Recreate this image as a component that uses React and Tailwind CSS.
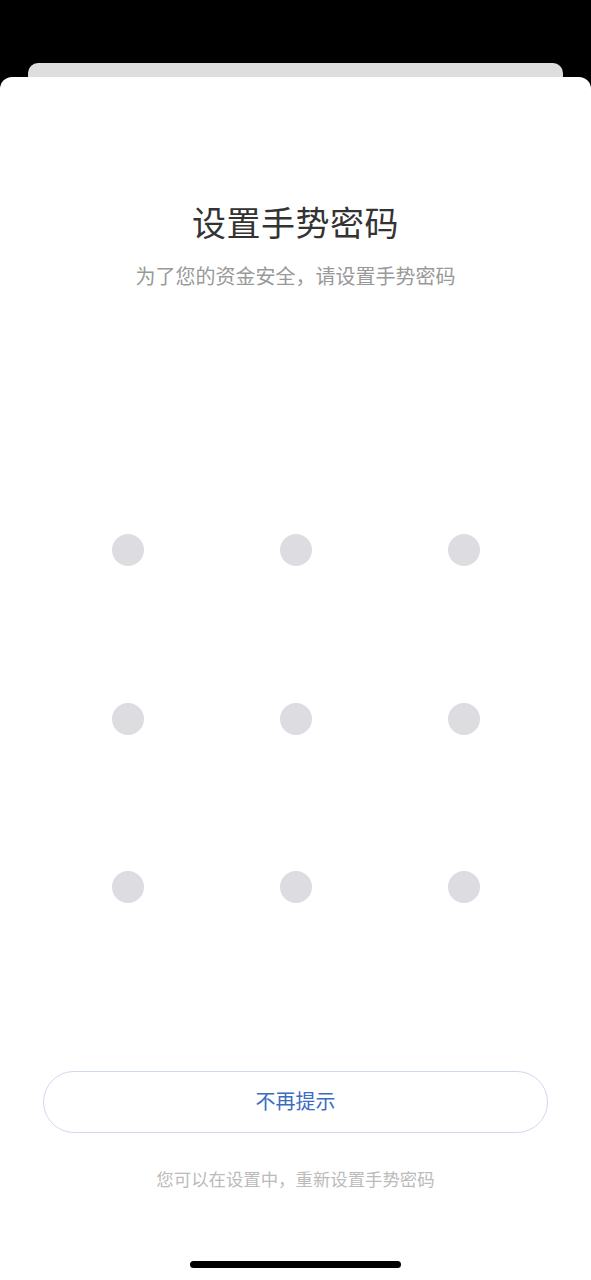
const FONT = {
  fontFamily: '"Noto Sans", "Noto Sans CJK SC", sans-serif',
};

function Dot() {
  return <div className="w-[32px] h-[32px] rounded-full bg-[#dcdce1]" />;
}

export default function App() {
  const dots = Array.from({ length: 9 });

  return (
    <div
      className="w-[591px] h-[1280px] bg-black flex flex-col overflow-hidden"
      style={FONT}
    >
      <div className="h-[63px] shrink-0" />
      <div className="mx-[28px] h-[14px] shrink-0 rounded-t-[10px] bg-[#dedede]" />
      <div className="flex-1 bg-white rounded-t-[12px] flex flex-col items-center">
        <h1 className="mt-[122px] text-[34px] leading-[48px] text-[#333333] tracking-[0.5px]">
          设置手势密码
        </h1>
        <p className="mt-[17px] text-[20px] leading-[26px] text-[#999999]">
          为了您的资金安全，请设置手势密码
        </p>

        <div className="mt-[244px] grid grid-cols-3 gap-x-[136px] gap-y-[136.5px]">
          {dots.map((_, i) => (
            <Dot key={i} />
          ))}
        </div>

        <button className="mt-[168px] w-[505px] h-[62px] rounded-full border border-[#cfd9ec] text-[20px] text-[#3b6cc2] flex items-center justify-center">
          不再提示
        </button>

        <p className="mt-[34px] text-[17.4px] leading-[24px] text-[#bbbbbb]">
          您可以在设置中，重新设置手势密码
        </p>

        <div className="mt-auto mb-[12px] w-[211px] h-[7px] rounded-full bg-black" />
      </div>
    </div>
  );
}
